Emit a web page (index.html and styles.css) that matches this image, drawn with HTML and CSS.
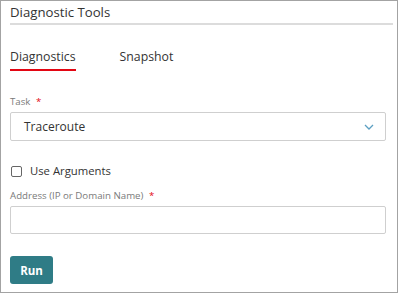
FILE: index.html
```html
<!DOCTYPE html>
<html>
<head>
<meta charset="utf-8">
<link rel="stylesheet" href="styles.css">
</head>
<body>
<div class="panel">
  <div class="header">Diagnostic Tools</div>
  <div class="tabs">
    <div class="tab active">Diagnostics</div>
    <div class="tab">Snapshot</div>
  </div>
  <div class="field task">
    <div class="label">Task <span class="req">*</span></div>
    <div class="select">
      <span>Traceroute</span>
      <svg class="chev" width="10" height="6" viewBox="0 0 10 6"><path d="M1 1 L5 5 L9 1" fill="none" stroke="#5c9fc2" stroke-width="1.3"/></svg>
    </div>
  </div>
  <label class="check"><span class="box"></span>Use Arguments</label>
  <div class="field addr">
    <div class="label">Address (IP or Domain Name) <span class="req">*</span></div>
    <div class="input"></div>
  </div>
  <div class="actions"><button class="run">Run</button></div>
</div>
</body>
</html>
```
FILE: styles.css
```css
* { box-sizing: border-box; }
html, body { margin: 0; padding: 0; background: #fff; }
body { font-family: "Open Sans", "Noto Sans", sans-serif; color: #333; }
.panel {
  width: 398px;
  height: 293px;
  border: 1px solid #a3a3a3;
  padding: 0 11px 0 9px;
}
.header {
  font-size: 13.2px;
  line-height: 22px;
  height: 24px;
  border-bottom: 2px solid #dcdcdc;
  margin-right: -7px;
  color: #333;
}
.tabs {
  display: flex;
  gap: 44px;
  margin-top: 23px;
}
.tab {
  font-size: 12.3px;
  line-height: 18px;
  padding-bottom: 3px;
  color: #333;
}
.tab.active {
  border-bottom: 2px solid #e30613;
}
.field { display: flex; flex-direction: column; }
.task { margin-top: 24px; }
.label {
  font-size: 9.7px;
  line-height: 14px;
  color: #7a7a7a;
  margin-bottom: 3px;
}
.req { color: #e30613; margin-left: 3px; }
.select {
  height: 29px;
  border: 1px solid #cfcfcf;
  border-radius: 2px;
  display: flex;
  align-items: center;
  justify-content: space-between;
  padding: 0 11px 0 13px;
  font-size: 12px;
  color: #333;
}
.chev { display: block; }
.check {
  display: flex;
  align-items: center;
  margin-top: 21px;
  font-size: 11.3px;
  line-height: 18px;
  color: #333;
}
.box {
  width: 11px;
  height: 11px;
  border: 1px solid #666;
  border-radius: 2px;
  margin-right: 8px;
  margin-left: 1px;
}
.addr { margin-top: 9px; }
.input {
  height: 28px;
  border: 1px solid #cfcfcf;
  border-radius: 2px;
}
.actions { margin-top: 22px; }
.run {
  width: 43px;
  height: 28px;
  background: #2f7c86;
  border: none;
  border-radius: 3px;
  color: #fff;
  font-family: "Open Sans", "Noto Sans", sans-serif;
  font-weight: 700;
  font-size: 11.5px;
  padding: 0;
}
```
